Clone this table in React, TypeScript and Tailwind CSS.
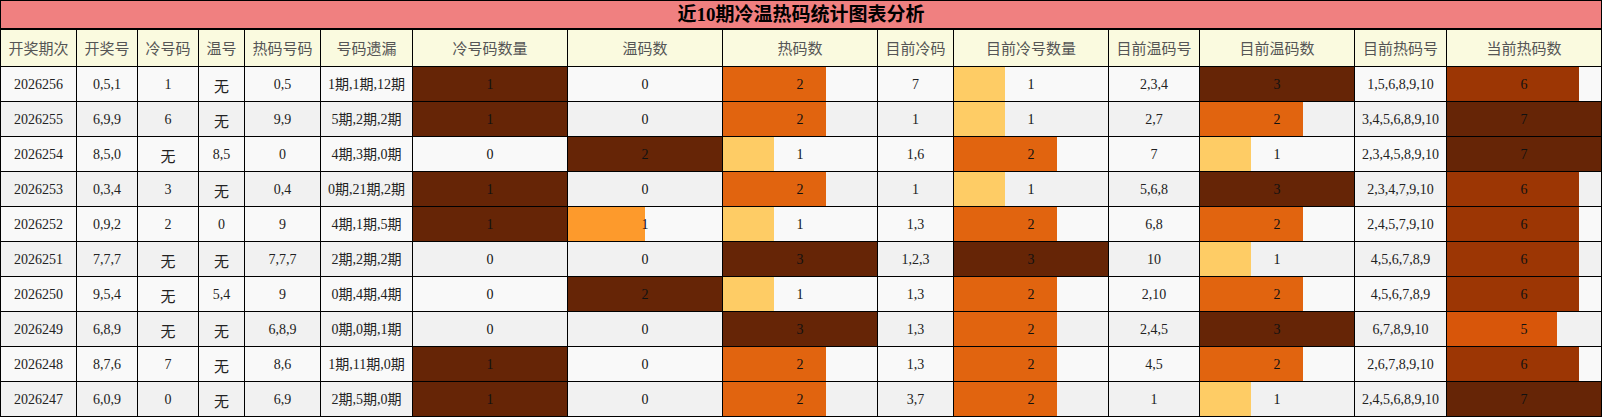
import React from "react";

type Row = {
  id: string;
  nums: string;
  cold: string;
  warm: string;
  hot: string;
  miss: string;
  coldN: number;
  warmN: number;
  hotN: number;
  curCold: string;
  curColdN: number;
  curWarm: string;
  curWarmN: number;
  curHot: string;
  curHotN: number;
};

const rows: Row[] = [
  { id: "2026256", nums: "0,5,1", cold: "1", warm: "无", hot: "0,5", miss: "1期,1期,12期", coldN: 1, warmN: 0, hotN: 2, curCold: "7", curColdN: 1, curWarm: "2,3,4", curWarmN: 3, curHot: "1,5,6,8,9,10", curHotN: 6 },
  { id: "2026255", nums: "6,9,9", cold: "6", warm: "无", hot: "9,9", miss: "5期,2期,2期", coldN: 1, warmN: 0, hotN: 2, curCold: "1", curColdN: 1, curWarm: "2,7", curWarmN: 2, curHot: "3,4,5,6,8,9,10", curHotN: 7 },
  { id: "2026254", nums: "8,5,0", cold: "无", warm: "8,5", hot: "0", miss: "4期,3期,0期", coldN: 0, warmN: 2, hotN: 1, curCold: "1,6", curColdN: 2, curWarm: "7", curWarmN: 1, curHot: "2,3,4,5,8,9,10", curHotN: 7 },
  { id: "2026253", nums: "0,3,4", cold: "3", warm: "无", hot: "0,4", miss: "0期,21期,2期", coldN: 1, warmN: 0, hotN: 2, curCold: "1", curColdN: 1, curWarm: "5,6,8", curWarmN: 3, curHot: "2,3,4,7,9,10", curHotN: 6 },
  { id: "2026252", nums: "0,9,2", cold: "2", warm: "0", hot: "9", miss: "4期,1期,5期", coldN: 1, warmN: 1, hotN: 1, curCold: "1,3", curColdN: 2, curWarm: "6,8", curWarmN: 2, curHot: "2,4,5,7,9,10", curHotN: 6 },
  { id: "2026251", nums: "7,7,7", cold: "无", warm: "无", hot: "7,7,7", miss: "2期,2期,2期", coldN: 0, warmN: 0, hotN: 3, curCold: "1,2,3", curColdN: 3, curWarm: "10", curWarmN: 1, curHot: "4,5,6,7,8,9", curHotN: 6 },
  { id: "2026250", nums: "9,5,4", cold: "无", warm: "5,4", hot: "9", miss: "0期,4期,4期", coldN: 0, warmN: 2, hotN: 1, curCold: "1,3", curColdN: 2, curWarm: "2,10", curWarmN: 2, curHot: "4,5,6,7,8,9", curHotN: 6 },
  { id: "2026249", nums: "6,8,9", cold: "无", warm: "无", hot: "6,8,9", miss: "0期,0期,1期", coldN: 0, warmN: 0, hotN: 3, curCold: "1,3", curColdN: 2, curWarm: "2,4,5", curWarmN: 3, curHot: "6,7,8,9,10", curHotN: 5 },
  { id: "2026248", nums: "8,7,6", cold: "7", warm: "无", hot: "8,6", miss: "1期,11期,0期", coldN: 1, warmN: 0, hotN: 2, curCold: "1,3", curColdN: 2, curWarm: "4,5", curWarmN: 2, curHot: "2,6,7,8,9,10", curHotN: 6 },
  { id: "2026247", nums: "6,0,9", cold: "0", warm: "无", hot: "6,9", miss: "2期,5期,0期", coldN: 1, warmN: 0, hotN: 2, curCold: "3,7", curColdN: 2, curWarm: "1", curWarmN: 1, curHot: "2,4,5,6,8,9,10", curHotN: 7 },
];

const widths = [
  "w-[76px]", "w-[61px]", "w-[61px]", "w-[46px]", "w-[76px]", "w-[92px]",
  "w-[155px]", "w-[155px]", "w-[155px]", "w-[76px]", "w-[155px]", "w-[91px]",
  "w-[155px]", "w-[92px]", "w-[155px]",
];

const headers = [
  "开奖期次", "开奖号", "冷号码", "温号", "热码号码", "号码遗漏", "冷号码数量", "温码数",
  "热码数", "目前冷码", "目前冷号数量", "目前温码号", "目前温码数", "目前热码号", "当前热码数",
];

function colorFor(f: number): string {
  if (f >= 0.999) return "bg-[#662506]";
  if (f > 0.8) return "bg-[#9c3604]";
  if (f > 0.7) return "bg-[#d8560a]";
  if (f > 0.6) return "bg-[#e1640f]";
  if (f > 0.45) return "bg-[#fd9a2c]";
  return "bg-[#fecc65]";
}

function TextCell({ w, children }: { w: string; children: React.ReactNode }) {
  return (
    <div className={`${w} shrink-0 border-r border-black flex items-center justify-center whitespace-nowrap`}>
      {children}
    </div>
  );
}

function Val({ v }: { v: string }) {
  if (v === "无") return <span className="text-[15px] font-[Noto_Sans_CJK_SC,sans-serif] pt-[5px]">无</span>;
  return <span>{v}</span>;
}

function BarCell({ w, v, max }: { w: string; v: number; max: number }) {
  const f = max > 0 ? v / max : 0;
  return (
    <div className={`${w} shrink-0 border-r border-black relative flex items-center justify-center`}>
      {v > 0 && (
        <div
          className={`absolute left-0 top-0 bottom-0 ${colorFor(f)}`}
          style={{ width: `${f * 100}%` }}
        />
      )}
      <span className="relative text-[#111]">{v}</span>
    </div>
  );
}

export default function App() {
  const maxOf = (k: keyof Row) => Math.max(...rows.map((r) => r[k] as number));
  const mCold = maxOf("coldN");
  const mWarm = maxOf("warmN");
  const mHot = maxOf("hotN");
  const mCurCold = maxOf("curColdN");
  const mCurWarm = maxOf("curWarmN");
  const mCurHot = maxOf("curHotN");

  return (
    <div className="w-[1602px] h-[417px] bg-white font-[Liberation_Serif,Noto_Sans_CJK_SC,serif] text-[14px] text-[#222]">
      <div className="border-l border-t border-black w-[1602px]">
        <div className="h-[29px] border-r border-b-2 border-black bg-[#f08080] flex items-center justify-center text-[19px] font-bold text-black leading-none">
          近10期冷温热码统计图表分析
        </div>
        <div className="flex h-[37px] border-b border-black bg-[#fafadf] text-[15px] text-[#555] font-[Noto_Sans_CJK_SC,sans-serif]">
          {headers.map((h, i) => (
            <TextCell key={i} w={widths[i]}>
              {h}
            </TextCell>
          ))}
        </div>
        {rows.map((r, idx) => (
          <div
            key={r.id}
            className={`flex h-[35px] border-b border-black ${idx % 2 === 0 ? "bg-[#f9f9f9]" : "bg-[#f1f1f1]"}`}
          >
            <TextCell w={widths[0]}>{r.id}</TextCell>
            <TextCell w={widths[1]}>{r.nums}</TextCell>
            <TextCell w={widths[2]}><Val v={r.cold} /></TextCell>
            <TextCell w={widths[3]}><Val v={r.warm} /></TextCell>
            <TextCell w={widths[4]}><Val v={r.hot} /></TextCell>
            <TextCell w={widths[5]}>{r.miss}</TextCell>
            <BarCell w={widths[6]} v={r.coldN} max={mCold} />
            <BarCell w={widths[7]} v={r.warmN} max={mWarm} />
            <BarCell w={widths[8]} v={r.hotN} max={mHot} />
            <TextCell w={widths[9]}>{r.curCold}</TextCell>
            <BarCell w={widths[10]} v={r.curColdN} max={mCurCold} />
            <TextCell w={widths[11]}>{r.curWarm}</TextCell>
            <BarCell w={widths[12]} v={r.curWarmN} max={mCurWarm} />
            <TextCell w={widths[13]}>{r.curHot}</TextCell>
            <BarCell w={widths[14]} v={r.curHotN} max={mCurHot} />
          </div>
        ))}
      </div>
    </div>
  );
}
